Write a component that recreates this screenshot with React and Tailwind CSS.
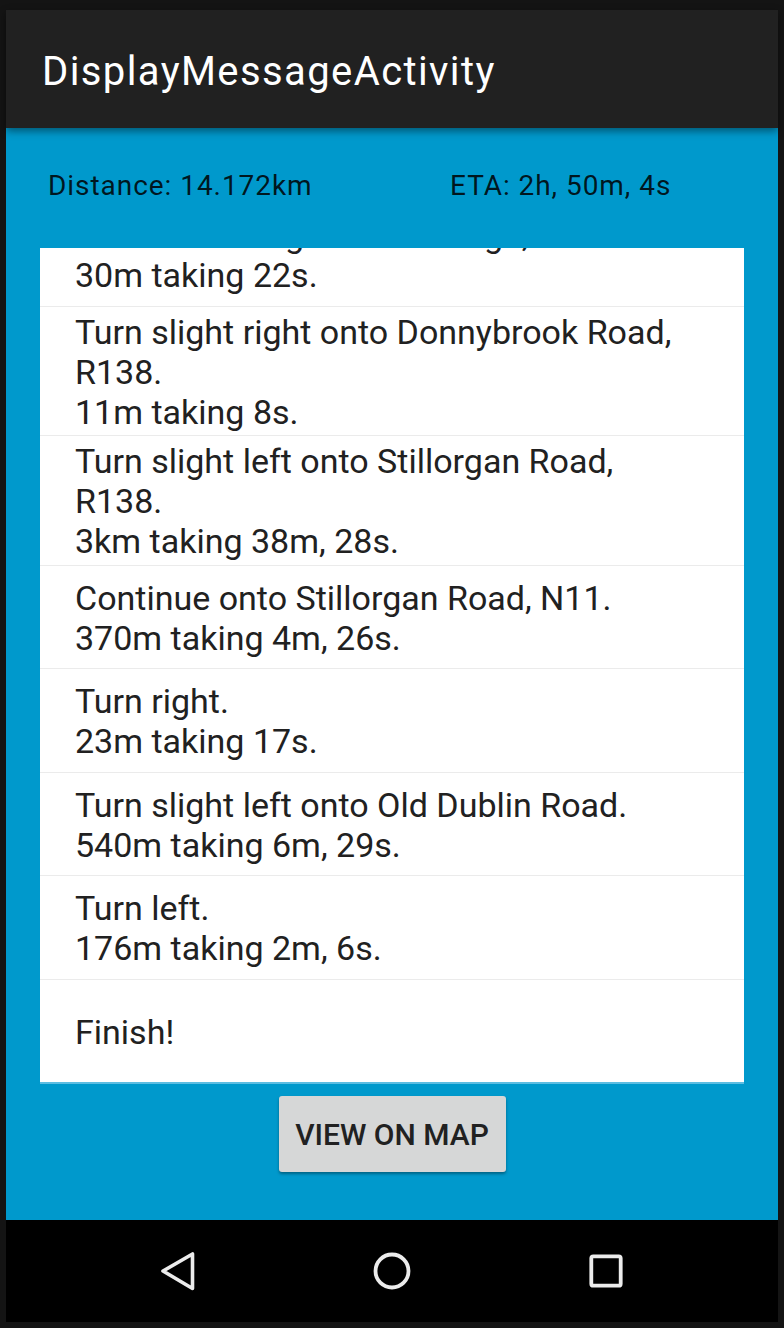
import React from "react";

const rows = [
  ["Continue straight to Ranelagh,", "30m taking 22s."],
  ["Turn slight right onto Donnybrook Road,", "R138.", "11m taking 8s."],
  ["Turn slight left onto Stillorgan Road,", "R138.", "3km taking 38m, 28s."],
  ["Continue onto Stillorgan Road, N11.", "370m taking 4m, 26s."],
  ["Turn right.", "23m taking 17s."],
  ["Turn slight left onto Old Dublin Road.", "540m taking 6m, 29s."],
  ["Turn left.", "176m taking 2m, 6s."],
  ["Finish!"],
];

function Back() {
  return (
    <svg width="40" height="40" viewBox="0 0 40 40">
      <polygon points="34.5,3 34.5,37.5 5,20" fill="none" stroke="#ececec" strokeWidth="3.6" strokeLinejoin="round" />
    </svg>
  );
}
function Home() {
  return (
    <svg width="40" height="40" viewBox="0 0 40 40">
      <circle cx="20" cy="20" r="16.5" fill="none" stroke="#ececec" strokeWidth="3.8" />
    </svg>
  );
}
function Recent() {
  return (
    <svg width="40" height="40" viewBox="0 0 40 40">
      <rect x="5.3" y="5.3" width="29.4" height="29.4" rx="2" fill="none" stroke="#ececec" strokeWidth="3.8" />
    </svg>
  );
}

export default function App() {
  return (
    <div className="w-[784px] h-[1328px] bg-[#141414] pt-[10px] px-[6px] pb-[6px] flex flex-col font-['Roboto',sans-serif]">
      <div className="h-[118px] shrink-0 bg-[#212121] flex items-center pl-[36px] pt-[6px] text-white text-[40px] tracking-[1.4px] relative z-10 shadow-[0_3px_8px_rgba(0,0,0,0.45)]">
        DisplayMessageActivity
      </div>
      <div className="flex-1 bg-[#0099cc] flex flex-col">
        <div className="h-[120px] shrink-0 flex items-center pl-[42px] pb-[4px] text-[28px] tracking-[0.95px] text-black/85">
          <div className="w-[402px]">Distance: 14.172km</div>
          <div>ETA: 2h, 50m, 4s</div>
        </div>
        <div className="mx-[34px] h-[836px] shrink-0 bg-white border-b-2 border-[#5cbde2] overflow-hidden">
          <div className="flex flex-col -mt-[45px]">
            {rows.map((lines, i) => (
              <div
                key={i}
                className={
                  "min-h-[103.5px] flex flex-col justify-center px-[35px] pt-[5px] pb-[3.5px] text-[34px] leading-[40px] text-[#212121] " +
                  (i < rows.length - 1 ? "border-b border-[#ebebeb]" : "")
                }
              >
                {lines.map((l, j) => (
                  <div key={j} className="whitespace-nowrap">{l}</div>
                ))}
              </div>
            ))}
          </div>
        </div>
        <div className="flex justify-center pt-[12px]">
          <div className="w-[227px] h-[76px] bg-[#d6d7d7] rounded-[3px] shadow-[0_2px_3px_rgba(0,0,0,0.35)] flex items-center justify-center text-[30px] font-medium text-[#212121]">
            VIEW ON MAP
          </div>
        </div>
      </div>
      <div className="h-[102px] shrink-0 bg-black flex justify-center items-center">
        <div className="w-[214px] flex justify-center"><Back /></div>
        <div className="w-[214px] flex justify-center"><Home /></div>
        <div className="w-[214px] flex justify-center"><Recent /></div>
      </div>
    </div>
  );
}
